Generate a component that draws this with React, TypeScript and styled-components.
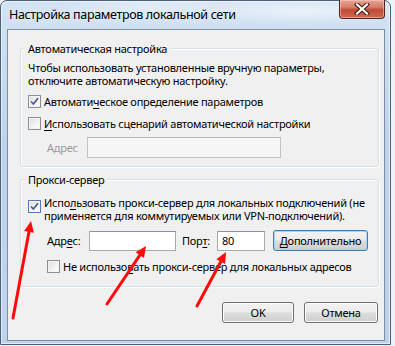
import React from 'react';
import styled, { createGlobalStyle } from 'styled-components';

const GlobalStyle = createGlobalStyle`
  html, body {
    margin: 0;
    padding: 0;
    background: #eef2f6;
  }
  * {
    box-sizing: border-box;
  }
`;

const Window = styled.div`
  position: relative;
  width: 391px;
  height: 345px;
  border: 1px solid #4a6079;
  border-radius: 7px 7px 0 0;
  background:
    radial-gradient(ellipse 120px 14px at 300px 10px, rgba(255, 255, 255, 0.55), transparent),
    radial-gradient(ellipse 90px 12px at 150px 6px, rgba(255, 255, 255, 0.35), transparent),
    linear-gradient(180deg, #d3e3f3 0%, #bed4ec 40%, #bcd3eb 100%);
  box-shadow: inset 0 0 0 1px rgba(255, 255, 255, 0.6);
  display: flex;
  flex-direction: column;
  font-family: 'Noto Sans', 'Liberation Sans', sans-serif;
  color: #000;
`;

const TitleBar = styled.div`
  height: 28px;
  display: flex;
  align-items: flex-start;
  padding-left: 8px;
`;

const Title = styled.div`
  flex: 1;
  margin-top: 6px;
  font-size: 12.5px;
  letter-spacing: -0.35px;
  line-height: 16px;
  color: #000;
  text-shadow: 0 0 8px rgba(255, 255, 255, 0.9);
`;

const CloseButton = styled.div`
  width: 46px;
  height: 19px;
  margin-top: -1px;
  margin-right: 5px;
  border: 1px solid #4f2620;
  border-top: none;
  border-radius: 0 0 4px 4px;
  background: linear-gradient(180deg, #e8a596 0%, #d47c6c 40%, #c24a36 55%, #cf6a52 100%);
  box-shadow: inset 0 0 0 1px rgba(255, 210, 200, 0.5);
  display: flex;
  align-items: center;
  justify-content: center;
`;

const Client = styled.div`
  flex: 1;
  margin: 0 5px 3px 6px;
  border: 1px solid #7d8ea3;
  background: #f0f0f0;
  padding: 18px 5px 0 12px;
  display: flex;
  flex-direction: column;
  font-size: 11px;
  letter-spacing: -0.25px;
  line-height: 13px;
`;

const Group = styled.div<{ $top: number; $bottom: number }>`
  position: relative;
  border: 1px solid #d5dfe5;
  border-radius: 3px;
  box-shadow: inset 1px 1px 0 #fff, 1px 1px 0 #fff;
  padding: ${(p) => p.$top}px 8px ${(p) => p.$bottom}px 7px;
  display: flex;
  flex-direction: column;
  & + & {
    margin-top: 12px;
  }
`;

const Legend = styled.span`
  position: absolute;
  top: -8px;
  left: 4px;
  padding: 0 3px;
  background: #f0f0f0;
  line-height: 15px;
  white-space: nowrap;
`;

const Para = styled.div`
  line-height: 13px;
  white-space: nowrap;
`;

const Row = styled.div<{ $gap: number; $indent?: number; $height?: number }>`
  display: flex;
  align-items: center;
  margin-top: ${(p) => p.$gap}px;
  margin-left: ${(p) => p.$indent ?? 0}px;
  height: ${(p) => p.$height ?? 16}px;
`;

const TopRow = styled.div<{ $gap: number }>`
  display: flex;
  align-items: flex-start;
  margin-top: ${(p) => p.$gap}px;
`;

const Box = styled.span<{ $focus?: boolean }>`
  width: 13px;
  height: 13px;
  flex: none;
  border: 1px solid ${(p) => (p.$focus ? '#5b78a8' : '#8e8f8f')};
  background: linear-gradient(135deg, #dcdcdc 0%, #f4f4f4 60%, #fefefe 100%);
  box-shadow: inset 0 0 0 1px #f4f4f4;
  display: flex;
  align-items: center;
  justify-content: center;
  margin-right: 3px;
`;

const BoxTop = styled(Box)`
  margin-top: 4px;
`;

const Label = styled.span<{ $muted?: boolean; $width?: number; $pad?: number }>`
  color: ${(p) => (p.$muted ? '#9a9a9a' : '#000')};
  width: ${(p) => (p.$width ? `${p.$width}px` : 'auto')};
  padding-left: ${(p) => p.$pad ?? 0}px;
  flex: none;
  white-space: nowrap;
`;

const Lines = styled.span`
  line-height: 13px;
  white-space: nowrap;
`;

const Key = styled.u`
  text-decoration: underline;
  text-underline-offset: 2px;
`;

const Input = styled.div<{ $width: number; $disabled?: boolean; $height?: number }>`
  width: ${(p) => p.$width}px;
  height: ${(p) => p.$height ?? 20}px;
  flex: none;
  border: 1px solid ${(p) => (p.$disabled ? '#c0c2c6' : '#a6a9b0')};
  border-top-color: ${(p) => (p.$disabled ? '#b5b7bb' : '#8e9199')};
  background: ${(p) => (p.$disabled ? '#f6f6f6' : '#fff')};
  padding-left: 4px;
  display: flex;
  align-items: center;
`;

const Button = styled.div<{ $width: number; $focus?: boolean; $left?: number }>`
  width: ${(p) => p.$width}px;
  height: 21px;
  flex: none;
  margin-left: ${(p) => p.$left ?? 0}px;
  border: 1px solid ${(p) => (p.$focus ? '#3c7fb1' : '#707070')};
  border-radius: 3px;
  background: linear-gradient(180deg, #f3f3f3 0%, #ebebeb 48%, #dddddd 52%, #cfcfcf 100%);
  box-shadow: inset 0 0 0 1px ${(p) => (p.$focus ? '#a6d6f2' : '#fbfbfb')};
  display: flex;
  align-items: center;
  justify-content: center;
  white-space: nowrap;
`;

const Footer = styled.div`
  display: flex;
  justify-content: flex-end;
  gap: 10px;
  margin-top: 15px;
  padding-right: 1px;
`;

const Arrows = styled.svg`
  position: absolute;
  left: -1px;
  top: -1px;
  pointer-events: none;
`;

function Check() {
  return (
    <svg width='9' height='9' viewBox='0 0 9 9'>
      <path d='M1 4.5 L3.4 7 L8 1.2' fill='none' stroke='#4a5d8c' strokeWidth='1.7' />
    </svg>
  );
}

function Arrow({ x1, y1, x2, y2 }: { x1: number; y1: number; x2: number; y2: number }) {
  const a = Math.atan2(y2 - y1, x2 - x1);
  const len = 11;
  const w = 5;
  const bx = x2 - Math.cos(a) * len;
  const by = y2 - Math.sin(a) * len;
  const px = -Math.sin(a) * w;
  const py = Math.cos(a) * w;
  return (
    <g>
      <line x1={x1} y1={y1} x2={bx} y2={by} stroke='#ff0a0a' strokeWidth='3' strokeLinecap='round' />
      <polygon points={`${x2},${y2} ${bx + px},${by + py} ${bx - px},${by - py}`} fill='#ff0a0a' />
    </g>
  );
}

export default function App(): JSX.Element {
  return (
    <>
      <GlobalStyle />
      <Window>
        <TitleBar>
          <Title>Настройка параметров локальной сети</Title>
          <CloseButton>
            <svg width='16' height='12' viewBox='0 0 16 12'>
              <path d='M3 1.5 L13 10.5 M13 1.5 L3 10.5' stroke='#3a1a14' strokeWidth='4.2' strokeLinecap='square' />
              <path d='M3 1.5 L13 10.5 M13 1.5 L3 10.5' stroke='#fff' strokeWidth='2.2' strokeLinecap='square' />
            </svg>
          </CloseButton>
        </TitleBar>
        <Client>
          <Group $top={12} $bottom={8}>
            <Legend>Автоматическая настройка</Legend>
            <Para>
              Чтобы использовать установленные вручную параметры,
              <br />
              отключите автоматическую настройку.
            </Para>
            <Row $gap={6}>
              <Box>
                <Check />
              </Box>
              <Label>
                Автомати<Key>ч</Key>еское определение параметров
              </Label>
            </Row>
            <Row $gap={6}>
              <Box />
              <Label>
                <Key>И</Key>спользовать сценарий автоматической настройки
              </Label>
            </Row>
            <Row $gap={6} $indent={19} $height={21}>
              <Label $muted $width={40}>
                Адрес
              </Label>
              <Input $width={194} $height={21} $disabled />
            </Row>
          </Group>
          <Group $top={16} $bottom={12}>
            <Legend>Прокси-сервер</Legend>
            <TopRow $gap={0}>
              <BoxTop $focus>
                <Check />
              </BoxTop>
              <Lines>
                Испо<Key>л</Key>ьзовать прокси-сервер для локальных подключений (не
                <br />
                применяется для коммутируемых или VPN-подключений).
              </Lines>
            </TopRow>
            <Row $gap={8} $indent={19} $height={21}>
              <Label $width={42}>
                Адр<Key>е</Key>с:
              </Label>
              <Input $width={87} />
              <Label $width={41} $pad={6}>
                Пор<Key>т</Key>:
              </Label>
              <Input $width={48}>80</Input>
              <Button $width={95} $focus $left={8}>
                <span>
                  <Key>Д</Key>ополнительно
                </span>
              </Button>
            </Row>
            <Row $gap={7} $indent={19}>
              <Box />
              <Label>
                Не использо<Key>в</Key>ать прокси-сервер для локальных адресов
              </Label>
            </Row>
          </Group>
          <Footer>
            <Button $width={72}>OK</Button>
            <Button $width={74}>Отмена</Button>
          </Footer>
        </Client>
        <Arrows width='395' height='346' viewBox='0 0 395 346'>
          <Arrow x1={13} y1={318} x2={31} y2={221} />
          <Arrow x1={107} y1={304} x2={146} y2={246} />
          <Arrow x1={197} y1={306} x2={226} y2={252} />
        </Arrows>
      </Window>
    </>
  );
}
